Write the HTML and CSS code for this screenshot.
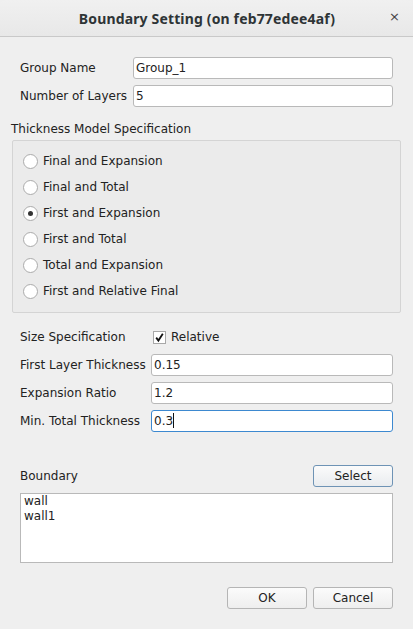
FILE: index.html
```html
<!DOCTYPE html>
<html>
<head>
<meta charset="utf-8">
<link rel="stylesheet" href="styles.css">
</head>
<body>
<div class="window">
  <div class="titlebar">
    <div class="title">Boundary Setting (on feb77edee4af)</div>
    <div class="close">×</div>
  </div>
  <div class="content">
    <div class="form form-top">
      <div class="label">Group Name</div>
      <div class="input">Group_1</div>
      <div class="label">Number of Layers</div>
      <div class="input">5</div>
    </div>

    <div class="section-title">Thickness Model Specification</div>
    <div class="groupbox">
      <div class="radio-row"><span class="radio"></span><span>Final and Expansion</span></div>
      <div class="radio-row"><span class="radio"></span><span>Final and Total</span></div>
      <div class="radio-row"><span class="radio checked"></span><span>First and Expansion</span></div>
      <div class="radio-row"><span class="radio"></span><span>First and Total</span></div>
      <div class="radio-row"><span class="radio"></span><span>Total and Expansion</span></div>
      <div class="radio-row"><span class="radio"></span><span>First and Relative Final</span></div>
    </div>

    <div class="form form-size">
      <div class="label">Size Specification</div>
      <div class="check-cell"><span class="checkbox">
        <svg width="11" height="11" viewBox="0 0 11 11"><path d="M2.2 5.6 L4.4 8.6 L8.8 1.8" fill="none" stroke="#111" stroke-width="1.8"/></svg>
      </span><span>Relative</span></div>
      <div class="label">First Layer Thickness</div>
      <div class="input">0.15</div>
      <div class="label">Expansion Ratio</div>
      <div class="input">1.2</div>
      <div class="label">Min. Total Thickness</div>
      <div class="input focused">0.3<span class="caret"></span></div>
    </div>

    <div class="boundary-row">
      <div class="label">Boundary</div>
      <div class="button default">Select</div>
    </div>
    <div class="listbox">
      <div>wall</div>
      <div>wall1</div>
    </div>

    <div class="buttons">
      <div class="button">OK</div>
      <div class="button">Cancel</div>
    </div>
  </div>
</div>
</body>
</html>
```

FILE: styles.css
```css
html, body {
  margin: 0;
  padding: 0;
  background: #efefef;
}
body {
  width: 413px;
  height: 629px;
  overflow: hidden;
  font-family: "DejaVu Sans", sans-serif;
  font-size: 12px;
  color: #222;
}
.window {
  width: 413px;
  height: 629px;
  background: #efefef;
}
.titlebar {
  height: 36px;
  border-bottom: 1px solid #c9c9c9;
  background: linear-gradient(#f0f0f0, #e8e8e8);
  border-radius: 6px 6px 0 0;
  display: flex;
  align-items: center;
  justify-content: center;
  position: relative;
}
.title {
  font-family: "Noto Sans", "Open Sans", sans-serif;
  font-weight: bold;
  font-size: 14px;
  color: #2e3436;
  letter-spacing: 0.15px;
  margin-left: 1px;
}
.close {
  position: absolute;
  right: 13px;
  top: 9px;
  font-size: 13px;
  color: #444;
  font-family: "DejaVu Sans", sans-serif;
}
.content {
  padding: 0 12px;
}
.form {
  display: grid;
  row-gap: 6px;
  padding-left: 8px;
  padding-right: 8px;
}
.form-top {
  grid-template-columns: 113px 1fr;
  margin-top: 20px;
}
.form-size {
  grid-template-columns: 131px 1fr;
  margin-top: 13px;
}
.label {
  height: 22px;
  line-height: 22px;
  white-space: nowrap;
}
.input {
  height: 20px;
  line-height: 20px;
  border: 1px solid #b9b9b9;
  border-radius: 3px;
  background: #fff;
  padding: 0 2px;
  white-space: nowrap;
}
.input.focused {
  border-color: #3d89d0;
}
.caret {
  display: inline-block;
  width: 1px;
  height: 15px;
  background: #111;
  vertical-align: -3px;
}
.section-title {
  margin-top: 14px;
  margin-left: -1px;
  height: 16px;
  line-height: 16px;
}
.groupbox {
  margin-top: 3px;
  box-sizing: border-box;
  height: 173px;
  border: 1px solid #d4d4d4;
  border-radius: 2px;
  background: #ebebeb;
  padding: 7px 10px 7px;
}
.radio-row {
  height: 26px;
  display: flex;
  align-items: center;
  gap: 5px;
}
.radio {
  width: 13px;
  height: 13px;
  border: 1px solid #ababab;
  border-radius: 50%;
  background: #fff;
  display: inline-flex;
  align-items: center;
  justify-content: center;
  flex: none;
}
.radio.checked::after {
  content: "";
  width: 5px;
  height: 5px;
  border-radius: 50%;
  background: #333;
}
.check-cell {
  height: 22px;
  display: flex;
  align-items: center;
  padding-left: 2px;
  gap: 5px;
}
.checkbox {
  width: 11px;
  height: 11px;
  border: 1px solid #a8a8a8;
  background: #fff;
  display: inline-flex;
  align-items: center;
  justify-content: center;
}
.checkbox svg {
  display: block;
}
.boundary-row {
  margin-top: 33px;
  padding: 0 8px 0 8px;
  display: flex;
  justify-content: space-between;
  align-items: center;
}
.button {
  width: 78px;
  height: 20px;
  line-height: 20px;
  text-align: center;
  border: 1px solid #b5b5b5;
  border-radius: 3px;
  background: linear-gradient(#fbfbfb, #eeeeee);
}
.button.default {
  border-color: #6e93b5;
  background: linear-gradient(#fbfbfb, #e9ecef);
}
.listbox {
  margin: 6px 8px 0 8px;
  height: 68px;
  border: 1px solid #b9b9b9;
  background: #fff;
  padding: 0 3px;
  line-height: 15px;
}
.buttons {
  margin-top: 24px;
  padding-right: 8px;
  display: flex;
  justify-content: flex-end;
  gap: 6px;
}
```
